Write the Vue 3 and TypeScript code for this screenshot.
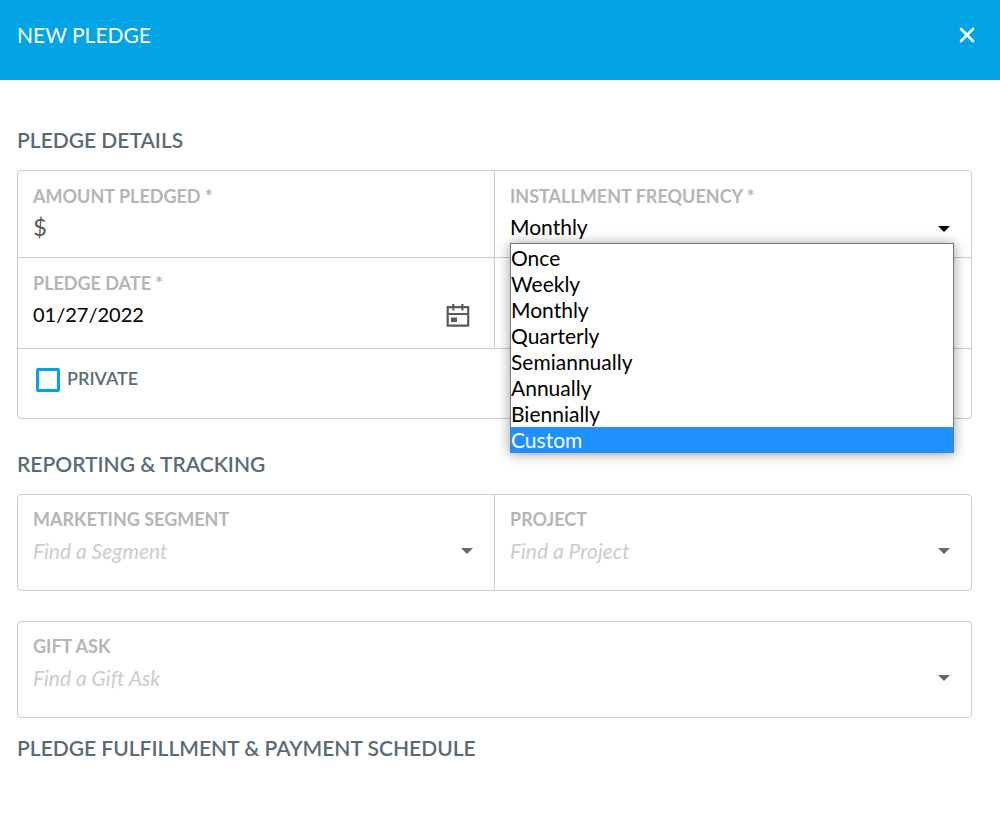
<script setup lang="ts">
import { ref } from 'vue'

const frequencies: string[] = [
  'Once',
  'Weekly',
  'Monthly',
  'Quarterly',
  'Semiannually',
  'Annually',
  'Biennially',
  'Custom',
]

const amount = ref('')
const frequency = ref('Monthly')
const highlighted = ref('Custom')
const listOpen = ref(true)
const pledgeDate = ref('01/27/2022')
const isPrivate = ref(false)
const segment = ref('')
const project = ref('')
const giftAsk = ref('')

function choose(option: string): void {
  frequency.value = option
  listOpen.value = false
}

function toggleList(): void {
  listOpen.value = !listOpen.value
}
</script>

<template>
  <div class="dialog" role="dialog" aria-labelledby="dialog-title">
    <header class="bar">
      <h1 id="dialog-title" class="bar-title">NEW PLEDGE</h1>
      <button class="close" type="button" aria-label="Close">
        <svg width="16" height="16" viewBox="0 0 16 16" aria-hidden="true">
          <path d="M2 2 L14 14 M14 2 L2 14" fill="none" stroke="#fff" stroke-width="2.6" stroke-linecap="round" />
        </svg>
      </button>
    </header>

    <form class="body" @submit.prevent>
      <h2 class="heading">PLEDGE DETAILS</h2>
      <div class="panel">
        <div class="row">
          <div class="field">
            <label class="label" for="amount">AMOUNT PLEDGED *</label>
            <div class="control">
              <span class="currency">$</span>
              <input id="amount" v-model="amount" class="input" type="text" />
            </div>
          </div>
          <div class="field">
            <label class="label" for="frequency">INSTALLMENT FREQUENCY *</label>
            <div class="control">
              <select id="frequency" v-model="frequency" class="input select" @mousedown.prevent="toggleList">
                <option v-for="f in frequencies" :key="f" :value="f">{{ f }}</option>
              </select>
              <svg class="caret dark" width="12" height="6" viewBox="0 0 12 6" aria-hidden="true">
                <path d="M0 0 H12 L6 6 Z" />
              </svg>
              <ul v-if="listOpen" class="options" role="listbox" aria-label="Installment frequency">
                <li
                  v-for="f in frequencies"
                  :key="f"
                  class="option"
                  :class="{ active: f === highlighted }"
                  role="option"
                  :aria-selected="f === frequency"
                  @mouseenter="highlighted = f"
                  @click="choose(f)"
                >{{ f }}</li>
              </ul>
            </div>
          </div>
        </div>
        <div class="row">
          <div class="field date">
            <label class="label" for="pledge-date">PLEDGE DATE *</label>
            <div class="control">
              <input id="pledge-date" v-model="pledgeDate" class="input date-input" type="text" />
              <button class="calendar" type="button" aria-label="Open calendar">
                <svg width="24" height="24" viewBox="0 0 24 24" aria-hidden="true">
                  <path d="M1.7 3.2 H22.2 V21.6 H1.7 Z M1.7 10 H22.2 M7.3 0 V6.5 M16.4 0 V6.5" fill="none" stroke="#585a5c" stroke-width="2.2" />
                  <rect x="5" y="13.5" width="6" height="4.6" fill="#585a5c" />
                </svg>
              </button>
            </div>
          </div>
          <div class="field"></div>
        </div>
        <div class="row">
          <div class="field private">
            <input id="private" v-model="isPrivate" class="check" type="checkbox" />
            <label class="label check-label" for="private">PRIVATE</label>
          </div>
        </div>
      </div>

      <h2 class="heading">REPORTING &amp; TRACKING</h2>
      <div class="panel">
        <div class="row">
          <div class="field lookup">
            <label class="label" for="segment">MARKETING SEGMENT</label>
            <div class="control">
              <input id="segment" v-model="segment" class="input" type="text" placeholder="Find a Segment" />
              <svg class="caret" width="12" height="6" viewBox="0 0 12 6" aria-hidden="true">
                <path d="M0 0 H12 L6 6 Z" />
              </svg>
            </div>
          </div>
          <div class="field lookup">
            <label class="label" for="project">PROJECT</label>
            <div class="control">
              <input id="project" v-model="project" class="input" type="text" placeholder="Find a Project" />
              <svg class="caret" width="12" height="6" viewBox="0 0 12 6" aria-hidden="true">
                <path d="M0 0 H12 L6 6 Z" />
              </svg>
            </div>
          </div>
        </div>
      </div>

      <div class="panel spaced">
        <div class="row">
          <div class="field lookup">
            <label class="label" for="gift-ask">GIFT ASK</label>
            <div class="control">
              <input id="gift-ask" v-model="giftAsk" class="input" type="text" placeholder="Find a Gift Ask" />
              <svg class="caret" width="12" height="6" viewBox="0 0 12 6" aria-hidden="true">
                <path d="M0 0 H12 L6 6 Z" />
              </svg>
            </div>
          </div>
        </div>
      </div>

      <h2 class="heading last">PLEDGE FULFILLMENT &amp; PAYMENT SCHEDULE</h2>
    </form>
  </div>
</template>

<style>
body {
  background: #fff;
}
</style>

<style scoped>
.dialog {
  font-family: Lato, "Liberation Sans", sans-serif;
  font-size: 21px;
  color: #5a6b75;
}

.dialog * {
  box-sizing: border-box;
}

.bar {
  display: flex;
  align-items: flex-start;
  justify-content: space-between;
  min-height: 80px;
  padding: 20px 18px 0 17px;
  background: #02a4e6;
}

.bar-title {
  margin: 0;
  font-size: 21px;
  font-weight: 400;
  line-height: 30px;
  color: #fff;
}

.close {
  display: flex;
  padding: 7px;
  border: 0;
  background: none;
  cursor: pointer;
}

.body {
  padding: 45px 28px 50px 17px;
}

.heading {
  margin: 30px 0 15px;
  font-size: 21px;
  font-weight: 600;
  line-height: 30px;
  color: #5a6b75;
}

.heading:first-child {
  margin-top: 0;
}

.heading.last {
  margin: 15px 0 0;
}

.panel {
  border: 1px solid #ccc;
  border-radius: 4px;
}

.panel.spaced {
  margin-top: 30px;
}

.row {
  display: flex;
}

.row + .row {
  border-top: 1px solid #ccc;
}

.field {
  flex: 1 1 0;
  min-width: 0;
  padding: 13px 16px 14px 15px;
}

.field + .field {
  border-left: 1px solid #ccc;
}

.date {
  padding-bottom: 18px;
}

.lookup {
  padding-top: 12px;
  padding-bottom: 24px;
}

.label {
  display: block;
  font-size: 18px;
  font-weight: 700;
  line-height: 24px;
  color: #b5b5b5;
}

.control {
  position: relative;
  display: flex;
  align-items: center;
  height: 35px;
  padding-top: 2px;
}

.lookup .control {
  padding-top: 4px;
}

.currency {
  font-size: 24px;
  color: #585a5c;
}

.input {
  flex: 1;
  min-width: 0;
  height: 31px;
  padding: 0;
  border: 0;
  outline: 0;
  background: none;
  font-family: inherit;
  font-size: 21px;
  color: #000;
}

.date-input {
  font-size: 20px;
}

.input::placeholder {
  font-style: italic;
  color: #ccc;
  opacity: 1;
}

.select {
  appearance: none;
}

.caret {
  flex: none;
  margin-right: 5px;
  fill: #5a6b75;
}

.caret.dark {
  margin-top: 4px;
  fill: #000;
}

.options {
  position: absolute;
  z-index: 1;
  top: 35px;
  left: 0;
  right: 1px;
  margin: 0;
  padding: 1px 0 0;
  border: 1px solid #767676;
  border-bottom: 0;
  background: #fff;
  box-shadow: 0 1px 12px rgba(0, 0, 0, 0.4);
  list-style: none;
}

.option {
  font-size: 21px;
  line-height: 26px;
  color: #000;
  cursor: default;
}

.option.active {
  background: #1e90ff;
  color: #fff;
}

.calendar {
  display: flex;
  margin-top: 4px;
  margin-right: 8px;
  padding: 0;
  border: 0;
  background: none;
  cursor: pointer;
}

.private {
  display: flex;
  align-items: flex-start;
  gap: 7px;
  padding: 19px 18px 26px;
}

.check {
  width: 24px;
  height: 24px;
  margin: 0;
  border: 3px solid #02a4e6;
  border-radius: 2px;
  background: #fff;
  appearance: none;
}

.check:checked {
  background: #02a4e6;
}

.check-label {
  line-height: 20px;
  font-weight: 600;
  color: #5a6b75;
}
</style>
